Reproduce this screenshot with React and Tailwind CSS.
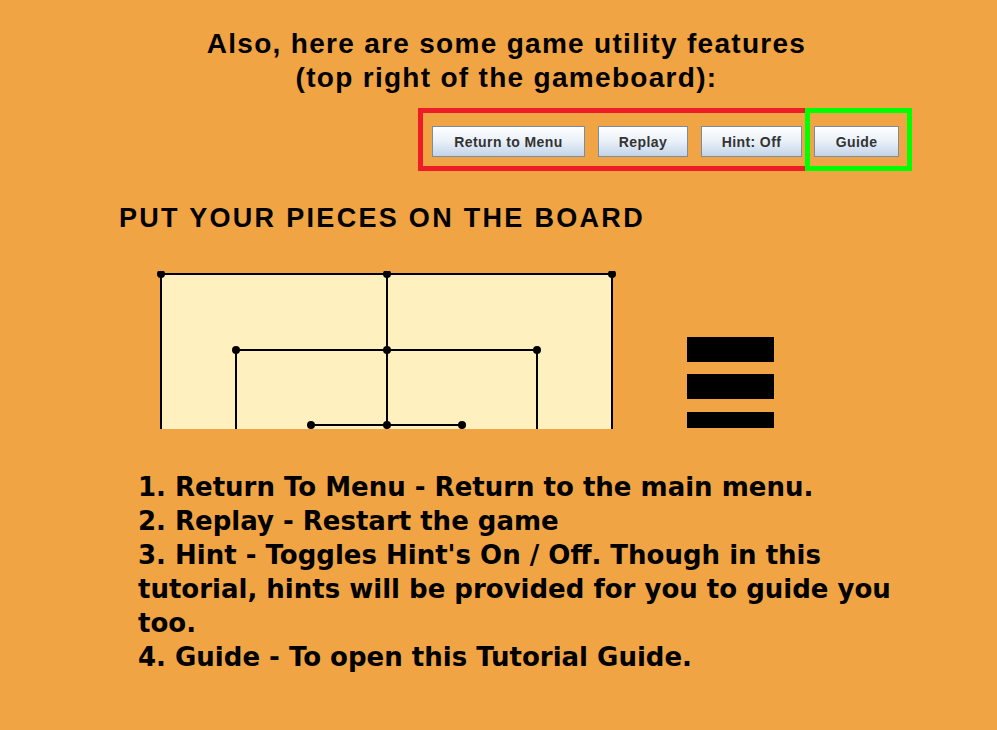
import React from "react";

function Btn({ children, w }) {
  return (
    <div
      className={`h-[31px] ${w} flex items-center justify-center pt-[2px] border border-[#7a8ca3] bg-gradient-to-b from-[#ffffff] via-[#e9f0f8] to-[#c3d4e8] text-[14px] tracking-[0.4px] font-bold text-[#333333] [font-family:'Liberation_Sans',Arial,sans-serif]`}
    >
      {children}
    </div>
  );
}

function Board() {
  const dots = [
    [161, 273], [387, 273], [612, 273],
    [236, 349], [387, 349], [537, 349],
    [311, 424], [387, 424], [462, 424],
  ];
  return (
    <svg width="470" height="158" viewBox="150 270 470 158" className="block">
      <rect x="161" y="273" width="451" height="160" fill="#fff0c0" stroke="#000" strokeWidth="2" />
      <path d="M236 433 V349 H537 V433" fill="none" stroke="#000" strokeWidth="2" />
      <path d="M311 433 V424 H462 V433" fill="none" stroke="#000" strokeWidth="2" />
      <path d="M387 273 V433" fill="none" stroke="#000" strokeWidth="2" />
      {dots.map(([x, y], i) => (
        <circle key={i} cx={x} cy={y} r="4" fill="#000" />
      ))}
    </svg>
  );
}

export default function App() {
  return (
    <div className="w-[997px] h-[730px] bg-[#f1a443] overflow-hidden text-black">
      <div className="pt-[27px] pl-[16px] flex flex-col items-center text-[28px] leading-[34px] tracking-[1.3px] font-bold [font-family:'Liberation_Sans',Arial,sans-serif]">
        <div>Also, here are some game utility features</div>
        <div>(top right of the gameboard):</div>
      </div>
      <div className="flex pl-[418px] mt-[13px]">
        <div className="w-[387px] h-[63px] border-[5px] border-r-0 border-[#ee1c24] flex items-start pl-[9px] pt-[13px] gap-[13px]">
          <Btn w="w-[153px]">Return to Menu</Btn>
          <Btn w="w-[90px]">Replay</Btn>
          <Btn w="w-[101px]">Hint: Off</Btn>
        </div>
        <div className="w-[107px] h-[63px] border-[5px] border-[#00ff00] pl-[4px] pt-[13px]">
          <Btn w="w-[85px]">Guide</Btn>
        </div>
      </div>
      <div className="pl-[119px] mt-[30px] text-[27px] leading-[34px] tracking-[2.3px] font-bold [font-family:'Liberation_Sans',Arial,sans-serif]">
        PUT YOUR PIECES ON THE BOARD
      </div>
      <div className="flex items-start pl-[150px] mt-[36px]">
        <Board />
        <div className="ml-[67px] mt-[66px] flex flex-col">
          <div className="w-[87px] h-[25px] bg-black" />
          <div className="w-[87px] h-[25px] bg-black mt-[12px]" />
          <div className="w-[87px] h-[16px] bg-black mt-[13px]" />
        </div>
      </div>
      <div className="pl-[138px] mt-[41px] text-[26px] leading-[34px] font-bold whitespace-nowrap [font-family:'DejaVu_Sans',Verdana,sans-serif]">
        <div>1. Return To Menu - Return to the main menu.</div>
        <div>2. Replay - Restart the game</div>
        <div>3. Hint - Toggles Hint's On / Off. Though in this</div>
        <div>tutorial, hints will be provided for you to guide you</div>
        <div>too.</div>
        <div>4. Guide - To open this Tutorial Guide.</div>
      </div>
    </div>
  );
}
